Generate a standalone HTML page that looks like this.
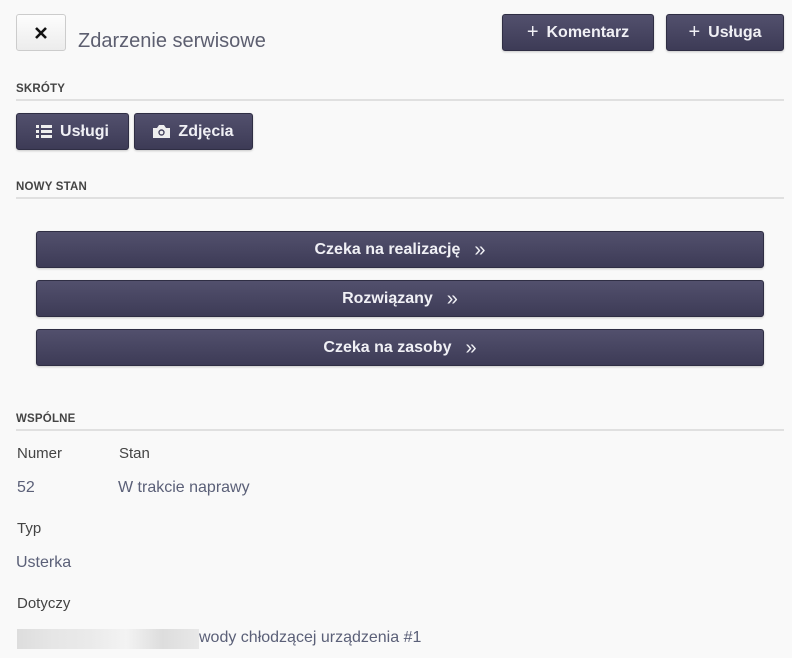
<!DOCTYPE html>
<html><head><meta charset="utf-8"><style>
*{box-sizing:border-box;margin:0;padding:0}
body{width:792px;height:658px;background:#f9f9f9;font-family:"Liberation Sans",sans-serif;position:relative;overflow:hidden;color:#333}
.b{position:absolute;height:37px;border-radius:3px;background:linear-gradient(#52506d,#3d3b56);border:1px solid #2f2e44;color:#f0f0f5;font-weight:bold;font-size:16px;display:flex;align-items:center;justify-content:center;box-shadow:0 1px 2px rgba(0,0,0,.2)}
.h{position:absolute;left:16px;font-size:11.5px;font-weight:bold;color:#444;letter-spacing:.2px}
.l{position:absolute;left:16px;width:768px;height:2px;background:#e0e0e0}
.t{position:absolute;font-size:15px}
.lab{color:#444}.val{color:#5b6078;font-size:16px}
.ch{font-weight:normal;margin-left:14px;font-size:20px;line-height:1}
</style></head><body>
<div style="position:absolute;left:16px;top:14px;width:50px;height:37px;border:1px solid #ccc;border-radius:3px;background:linear-gradient(#fdfdfd,#ececec);display:flex;align-items:center;justify-content:center">
<svg width="14" height="14" viewBox="0 0 14 14"><path d="M2 2L12 12M12 2L2 12" stroke="#111" stroke-width="2.6"/></svg></div>
<div style="position:absolute;left:78px;top:30px;font-size:20px;color:#5d5f70">Zdarzenie serwisowe</div>
<div class="b" style="left:502px;top:14px;width:152px"><span style="font-weight:normal;font-size:20px;margin-right:8px">+</span>Komentarz</div>
<div class="b" style="left:666px;top:14px;width:118px"><span style="font-weight:normal;font-size:20px;margin-right:8px">+</span>Usługa</div>
<div class="h" style="top:83px">SKRÓTY</div><div class="l" style="top:99px"></div>
<div class="b" style="left:16px;top:113px;width:113px"><svg width="16" height="13" viewBox="0 0 16 13" style="margin-right:8px"><path d="M0 0h3v3H0zM5 0h11v3H5zM0 5h3v3H0zM5 5h11v3H5zM0 10h3v3H0zM5 10h11v3H5z" fill="#eee"/></svg>Usługi</div>
<div class="b" style="left:134px;top:113px;width:119px"><svg width="17" height="13" viewBox="0 0 17 13" style="margin-right:8px"><path d="M0 3h4l2-3h5l2 3h4v10H0z" fill="#eee"/><circle cx="8.5" cy="7.5" r="3.2" fill="#46445f"/><circle cx="8.5" cy="7.5" r="1.8" fill="#eee"/></svg>Zdjęcia</div>
<div class="h" style="top:181px">NOWY STAN</div><div class="l" style="top:197px"></div>
<div class="b" style="left:36px;top:231px;width:728px">Czeka na realizację<span class="ch">»</span></div>
<div class="b" style="left:36px;top:280px;width:728px">Rozwiązany<span class="ch">»</span></div>
<div class="b" style="left:36px;top:329px;width:728px">Czeka na zasoby<span class="ch">»</span></div>
<div class="h" style="top:413px">WSPÓLNE</div><div class="l" style="top:429px"></div>
<div class="t lab" style="left:17px;top:445px">Numer</div>
<div class="t lab" style="left:119px;top:445px">Stan</div>
<div class="t val" style="left:17px;top:479px">52</div>
<div class="t val" style="left:118px;top:479px">W trakcie naprawy</div>
<div class="t lab" style="left:17px;top:520px">Typ</div>
<div class="t val" style="left:16px;top:554px">Usterka</div>
<div class="t lab" style="left:17px;top:595px">Dotyczy</div>
<div style="position:absolute;left:17px;top:629px;width:182px;height:20px;background:linear-gradient(90deg,#ddd,#e6e6e6,#eaeaea,#f3f3f3,#ddd,#e8e8e8)"></div>
<div class="t val" style="left:199px;top:629px">wody chłodzącej urządzenia #1</div>
</body></html>
